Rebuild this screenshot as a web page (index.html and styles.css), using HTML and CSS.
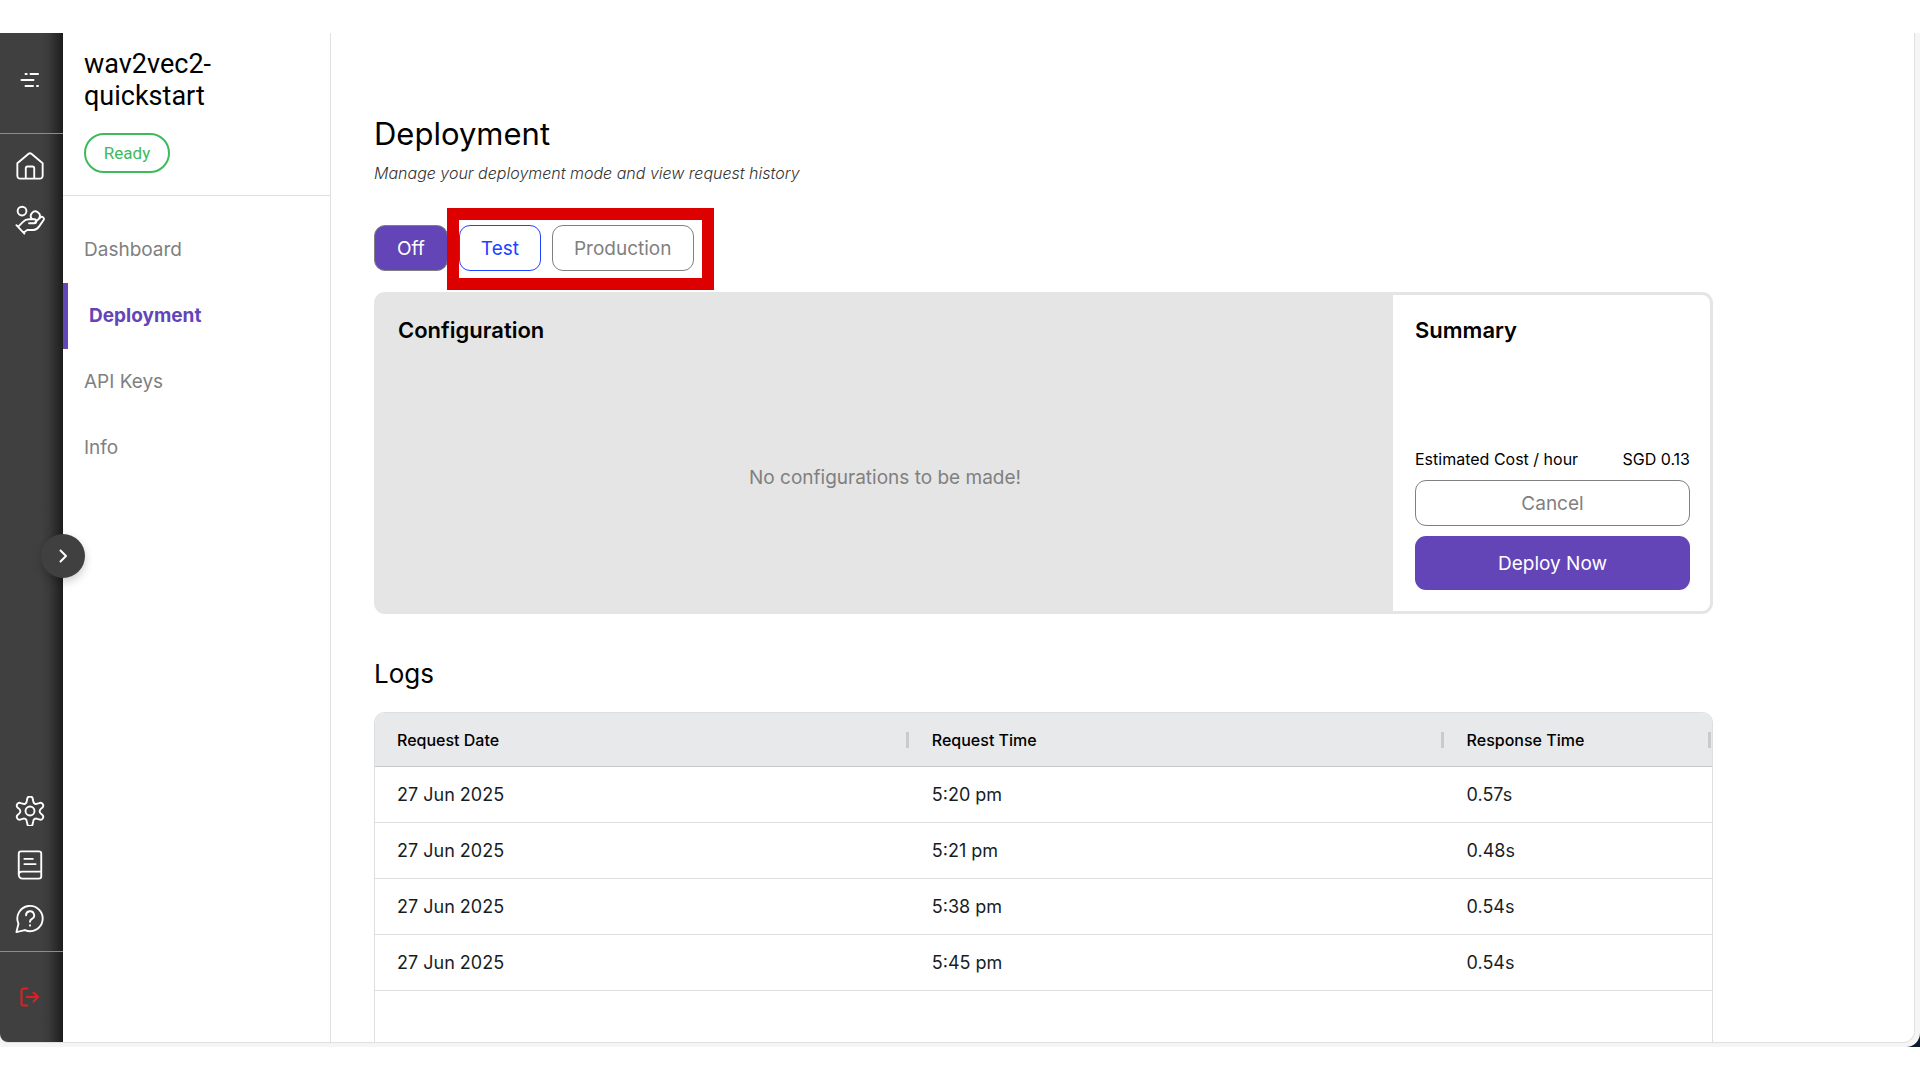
FILE: index.html
```html
<!DOCTYPE html>
<html lang="en">
<head>
<meta charset="utf-8">
<title>wav2vec2-quickstart – Deployment</title>
<link rel="stylesheet" href="styles.css">
</head>
<body>
<div class="backdrop">
<div class="frame">
<div class="app">
  <nav class="rail" aria-label="Primary">
    <div class="rail-top">
      <button class="rail-link" aria-label="Menu">
        <svg class="icon-small" viewBox="0 0 20 20"><path d="M5.500 4h1.200M10.500 4h7.500M1.500 10h12M5.500 16h7.500M17 16h1"/></svg>
      </button>
    </div>
    <div class="rail-group">
      <a class="rail-link" href="#" aria-label="Home">
        <svg class="icon" viewBox="0 0 32 32"><path d="M2.500 13 14.500 3a2.400 2.400 0 0 1 3 0l12 10v13.500a3 3 0 0 1-3 3h-21a3 3 0 0 1-3-3zM11.500 29V18.500a2 2 0 0 1 2-2h5a2 2 0 0 1 2 2V29"/></svg>
      </a>
      <a class="rail-link" href="#" aria-label="Services">
        <svg class="icon" viewBox="0 0 32 32"><circle cx="7.500" cy="6.500" r="4.700"/><path d="M18.200 15a4.800 4.800 0 1 1 7.800-1.200"/><path d="M1.500 21.500l8.500 9M3.500 23l5-5c2-2.200 4-2.800 6.500-2.800h5.500c3 0 3 4.300 0 4.300H15M20.500 19.300l6.500-6c2-1.700 5 .5 3.300 3L26 22.500c-2 2.800-3.500 4.200-6.500 4.200H13L9 29.500"/></svg>
      </a>
    </div>
    <div class="rail-group rail-bottom">
      <a class="rail-link" href="#" aria-label="Settings">
        <svg class="icon" viewBox="0 0 32 32"><circle cx="16" cy="16" r="4.800"/><path d="M13 3.500a3 3 0 0 1 6 0l.5 2.200a3 3 0 0 0 4.300 2.500l2-.7a3 3 0 0 1 3.200 5l-1.700 1.500a3 3 0 0 0 0 4.500l1.700 1.500a3 3 0 0 1-3.200 5l-2-.7a3 3 0 0 0-4.300 2.500l-.5 2.200a3 3 0 0 1-6 0l-.5-2.200a3 3 0 0 0-4.300-2.500l-2 .7a3 3 0 0 1-3.200-5l1.700-1.500a3 3 0 0 0 0-4.500L3 12.500a3 3 0 0 1 3.200-5l2 .7a3 3 0 0 0 4.300-2.500z"/></svg>
      </a>
      <a class="rail-link" href="#" aria-label="Documentation">
        <svg class="icon" viewBox="0 0 32 32"><path d="M6.500 1.500h19A2.500 2.500 0 0 1 28 4v24a2.500 2.500 0 0 1-2.500 2.500H8a4 4 0 0 1-4-4V4a2.500 2.500 0 0 1 2.500-2.500zM4 26a3.500 3 0 0 1 3.500-3H28M10 9.500h9M10 15h12"/></svg>
      </a>
      <a class="rail-link" href="#" aria-label="Help">
        <svg class="icon" viewBox="0 0 32 32"><path d="M3.700 21A13.500 13.500 0 1 1 10.500 27.800L1.500 30z"/><path d="M11.800 12a4.300 4.300 0 1 1 6.300 3.800c-1.500.8-2.100 1.500-2.100 3.200"/><path d="M16 22.500v.6"/></svg>
      </a>
    </div>
    <div class="rail-end">
      <button class="rail-link logout" aria-label="Log out">
        <svg class="icon-small" viewBox="0 0 20 20"><path d="M7.500 1.500h-4a2 2 0 0 0-2 2v13a2 2 0 0 0 2 2h4M6.500 10H18M13.500 5.500 18 10l-4.500 4.500"/></svg>
      </button>
    </div>
    <button class="expand" aria-label="Expand menu">
      <svg class="chevron" viewBox="0 0 16 16"><path d="M5.500 2.500 11 8l-5.500 5.500"/></svg>
    </button>
  </nav>

  <aside class="side">
    <header class="project">
      <h2 class="project-name">wav2vec2-quickstart</h2>
      <span class="status">Ready</span>
    </header>
    <nav class="side-nav" aria-label="Project">
      <a class="side-link" href="#">Dashboard</a>
      <a class="side-link active" href="#" aria-current="page">Deployment</a>
      <a class="side-link" href="#">API Keys</a>
      <a class="side-link" href="#">Info</a>
    </nav>
  </aside>

  <main class="main">
    <h1 class="title">Deployment</h1>
    <p class="subtitle">Manage your deployment mode and view request history</p>
    <div class="modes">
      <button class="btn selected">Off</button>
      <div class="mode-pair">
        <button class="btn current">Test</button>
        <button class="btn">Production</button>
      </div>
    </div>
    <section class="panel">
      <div class="config">
        <h3 class="panel-title">Configuration</h3>
        <p class="empty">No configurations to be made!</p>
      </div>
      <div class="summary">
        <h3 class="panel-title">Summary</h3>
        <p class="cost"><span>Estimated Cost / hour</span><span>SGD 0.13</span></p>
        <button class="btn">Cancel</button>
        <button class="btn deploy">Deploy Now</button>
      </div>
    </section>
    <h2 class="logs-title">Logs</h2>
    <div class="logs">
      <table class="table">
        <thead>
          <tr><th>Request Date</th><th>Request Time</th><th>Response Time</th></tr>
        </thead>
        <tbody>
          <tr><td>27 Jun 2025</td><td>5:20 pm</td><td>0.57s</td></tr>
          <tr><td>27 Jun 2025</td><td>5:21 pm</td><td>0.48s</td></tr>
          <tr><td>27 Jun 2025</td><td>5:38 pm</td><td>0.54s</td></tr>
          <tr><td>27 Jun 2025</td><td>5:45 pm</td><td>0.54s</td></tr>
        </tbody>
      </table>
    </div>
  </main>
</div>
</div>
</div>
</body>
</html>
```
FILE: styles.css
```css
* { box-sizing: border-box; }

body {
  margin: 0;
  min-height: 100vh;
  padding: 33px 0;
  display: flex;
  flex-direction: column;
  background: #fff;
  color: #000;
  font-family: Inter, "Liberation Sans", sans-serif;
}

h1, h2, h3, p { margin: 0; }
button { font-family: inherit; cursor: pointer; }
a { text-decoration: none; }

.backdrop {
  flex: 1;
  display: flex;
  background: linear-gradient(to right, #fff 50%, #0d1b30 50%);
}

.frame {
  flex: 1;
  display: flex;
  padding: 0 5px 4px 0;
  background: #f5f5f5;
  border-radius: 0 0 14px 2px;
}

.app {
  flex: 1;
  display: flex;
  background: #fff;
  border: solid #e0e0e0;
  border-width: 0 1px 1px 0;
  border-radius: 0 0 12px 8px;
}

/* Icon rail */
.rail {
  position: relative;
  width: 63px;
  display: flex;
  flex-direction: column;
  background: linear-gradient(to left, #1c1c1c, #2c2c2c 7px, #3a3a3a 14px, #404040 22px);
  border-radius: 0 0 0 8px;
}

.rail-top {
  height: 101px;
  padding: 20px 0 0;
  border-bottom: 1px solid #8c8c8c;
}

.rail-group {
  display: flex;
  flex-direction: column;
  padding: 5px 0;
}

.rail-bottom { margin-top: auto; }

.rail-end {
  height: 91px;
  padding-top: 18px;
  border-top: 1px solid #8c8c8c;
}

.rail-link {
  display: flex;
  align-items: center;
  justify-content: center;
  width: 60px;
  height: 54px;
  padding: 0;
  border: 0;
  background: none;
  color: #fff;
}

.logout { color: #e02020; }

.rail svg {
  fill: none;
  stroke: currentColor;
  stroke-width: 2;
  stroke-linecap: round;
  stroke-linejoin: round;
}

.icon { width: 30px; height: 30px; }
.icon-small { width: 20px; height: 20px; }
.chevron { width: 16px; height: 16px; }

.expand {
  position: absolute;
  top: 501px;
  right: -22px;
  width: 44px;
  height: 44px;
  display: flex;
  align-items: center;
  justify-content: center;
  padding: 0;
  border: 0;
  border-radius: 50%;
  background: #404040;
  color: #fff;
  box-shadow: 0 4px 10px rgba(0, 0, 0, 0.2);
}

/* Project sidebar */
.side {
  width: 268px;
  border-right: 1px solid #e0e0e0;
}

.project {
  height: 163px;
  padding: 15px 21px 0;
  border-bottom: 1px solid #e0e0e0;
}

.project-name {
  width: 160px;
  margin-bottom: 21px;
  font: 400 27px/32px Roboto, sans-serif;
}

.status {
  display: inline-flex;
  align-items: center;
  justify-content: center;
  width: 86px;
  height: 40px;
  border: 2px solid #3dba5c;
  border-radius: 20px;
  color: #3dba5c;
  font: 400 17px/20px Roboto, sans-serif;
}

.side-nav {
  display: flex;
  flex-direction: column;
  padding-top: 21px;
}

.side-link {
  height: 66px;
  padding-left: 21px;
  color: #808080;
  font-size: 19px;
  line-height: 66px;
}

.side-link.active {
  border-left: 5px solid #6345b8;
  color: #6345b8;
  font-weight: 700;
}

/* Deployment page */
.main {
  flex: 1;
  display: flex;
  flex-direction: column;
  padding: 81px 201px 0 43px;
}

.title {
  font-weight: 400;
  font-size: 31px;
  line-height: 40px;
}

.subtitle {
  margin: 7px 0 40px;
  color: #333;
  font-weight: 300;
  font-style: italic;
  font-size: 16px;
  line-height: 24px;
}

.modes, .mode-pair {
  display: flex;
  gap: 11px;
}

.mode-pair { position: relative; }

.mode-pair::after {
  content: "";
  position: absolute;
  inset: -17px -20px -19px -12px;
  border: 12px solid #dd0000;
  pointer-events: none;
}

.btn {
  height: 46px;
  padding: 0 21px;
  border: 1px solid #808080;
  border-radius: 11px;
  background: #fff;
  color: #808080;
  font-size: 19px;
}

.btn.selected {
  padding: 0 22px;
  background: #6345b8;
  color: #fff;
}

.btn.current {
  border-color: #1a44ff;
  color: #1a44ff;
}

.panel {
  display: flex;
  height: 322px;
  margin-top: 21px;
  border: 3px solid #e5e5e5;
  border-radius: 11px;
}

.config {
  flex: 1;
  display: flex;
  flex-direction: column;
  padding: 21px 21px 0;
  background: #e5e5e5;
}

.panel-title {
  font-weight: 600;
  font-size: 22px;
  line-height: 28px;
}

.empty {
  margin: auto;
  color: #808080;
  font-size: 19px;
}

.summary {
  width: 317px;
  display: flex;
  flex-direction: column;
  padding: 21px 20px 21px 22px;
}

.cost {
  display: flex;
  justify-content: space-between;
  margin: auto 0 9px;
  font-size: 16px;
  line-height: 24px;
}

.btn.deploy {
  height: 54px;
  margin-top: 10px;
  border: 0;
  background: #6345b8;
  color: #fff;
}

.logs-title {
  margin: 42px 0 21px;
  font-weight: 400;
  font-size: 26px;
  line-height: 35px;
}

.logs {
  flex: 1;
  border: 1px solid #dde0e1;
  border-bottom: 0;
  border-radius: 11px 11px 0 0;
  overflow: hidden;
}

.table {
  width: 100%;
  table-layout: fixed;
  border-collapse: separate;
  border-spacing: 0;
}

.table th, .table td {
  padding: 0 22px;
  border-bottom: 1px solid #dddfe0;
  text-align: left;
}

.table th {
  position: relative;
  width: 40%;
  height: 54px;
  border-color: #c6c8c9;
  background: #e8e9eb;
  font-weight: 500;
  font-size: 16px;
}

.table th:last-child { width: 20%; }

.table th::after {
  content: "";
  position: absolute;
  top: 19px;
  right: 1px;
  width: 3px;
  height: 16px;
  background: #c8cacb;
}

.table td {
  height: 56px;
  color: #181d1f;
  font-size: 18px;
}
```
